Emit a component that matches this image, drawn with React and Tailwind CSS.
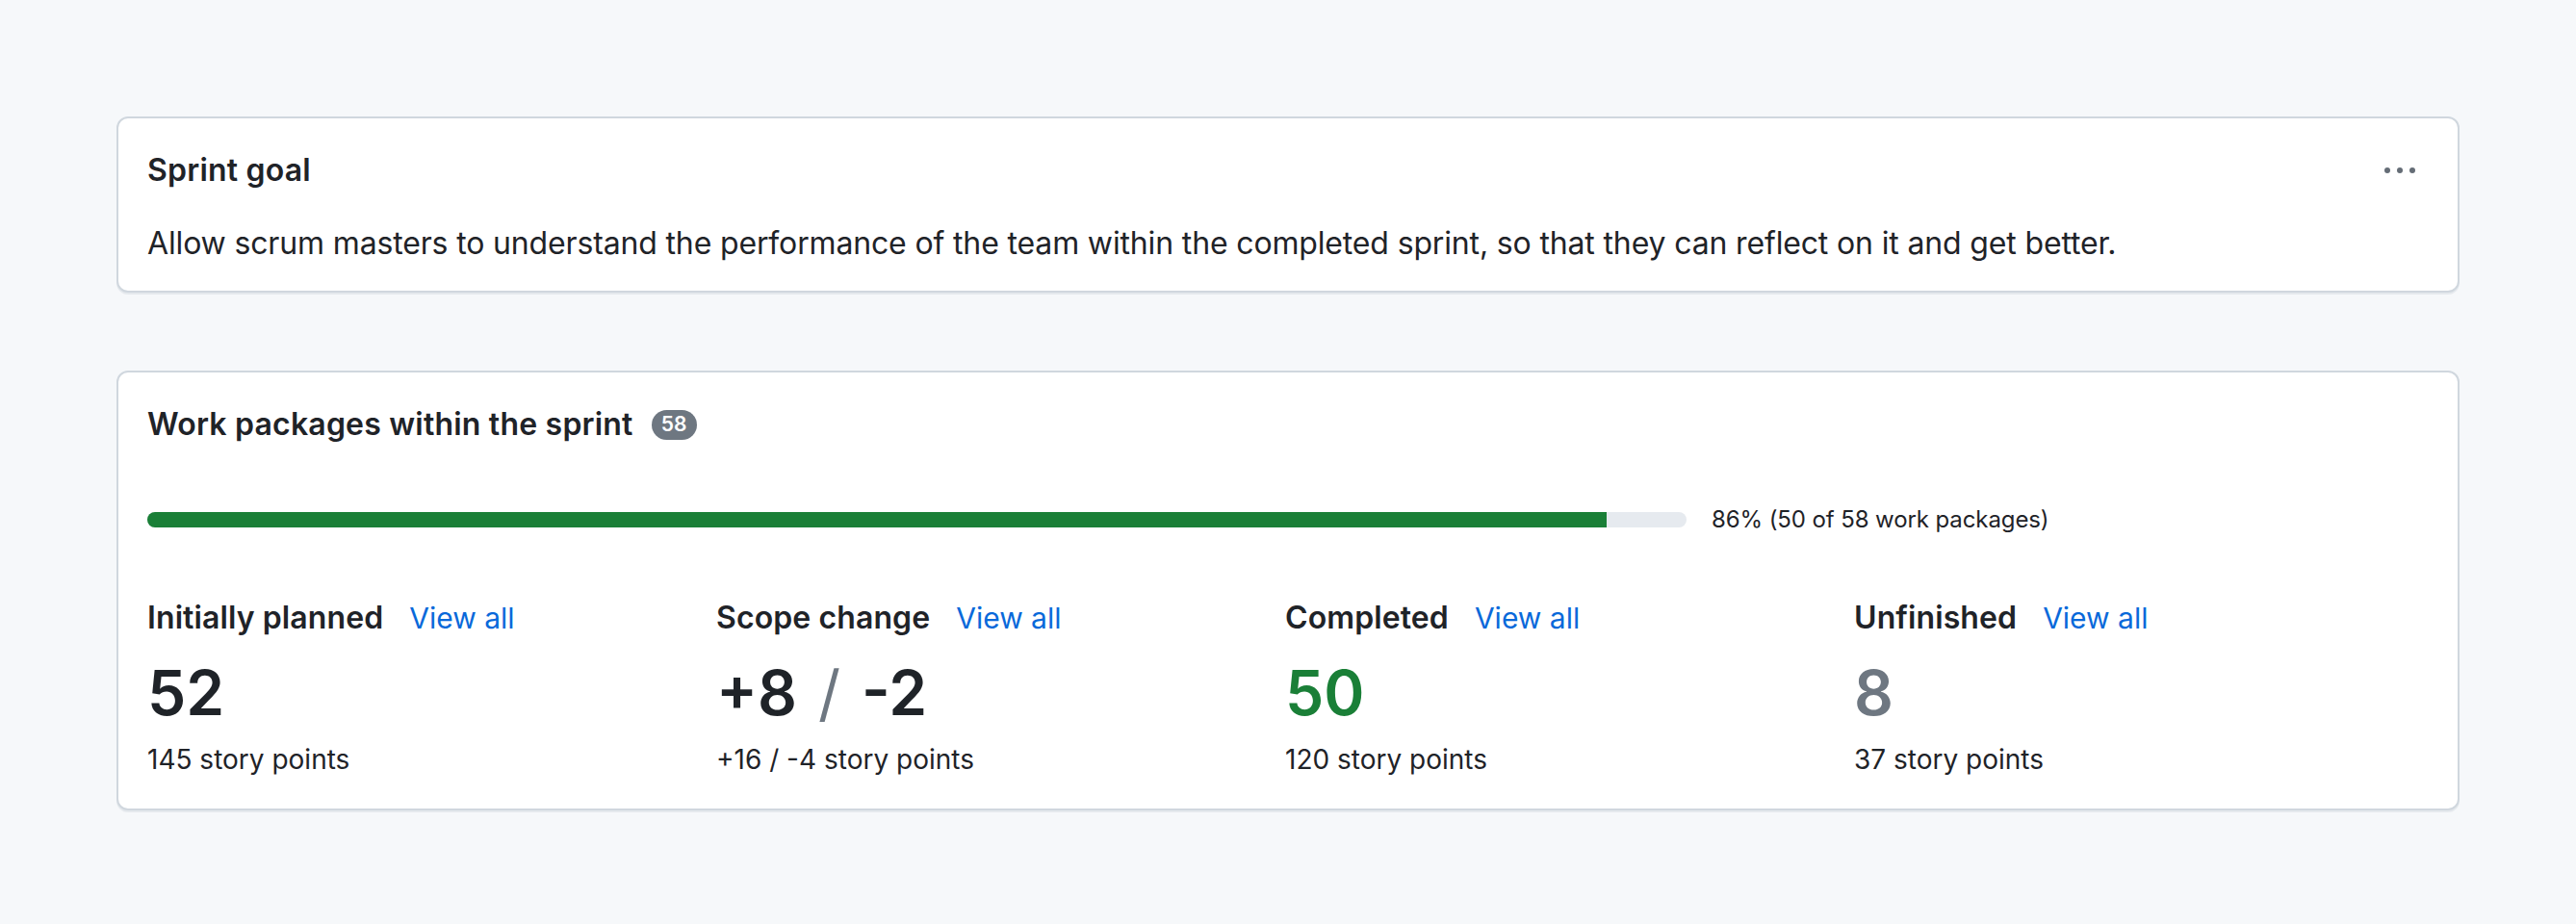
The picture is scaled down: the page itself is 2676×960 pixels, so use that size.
export default function App() {
  const stats = [
    { title: "Initially planned", value: <span>52</span>, color: "text-[#1f2328]", points: "145 story points" },
    {
      title: "Scope change",
      value: (
        <span>
          +8<span className="mx-[22px] font-normal text-[#6e7781]">/</span>-2
        </span>
      ),
      color: "text-[#1f2328]",
      points: "+16 / -4 story points",
    },
    { title: "Completed", value: <span>50</span>, color: "text-[#1a7f37]", points: "120 story points" },
    { title: "Unfinished", value: <span>8</span>, color: "text-[#6e7781]", points: "37 story points" },
  ];

  return (
    <div className="min-h-screen bg-[#f6f8fa] px-[121px] pt-[121px] pb-10 font-[Inter,sans-serif] text-[#1f2328]">
      <section className="rounded-[12px] border-2 border-[#d0d7de] bg-white px-[30px] pt-[30px] pb-[25px] shadow-[0_2px_0_rgba(208,215,222,0.45)]">
        <div className="flex items-center justify-between">
          <h2 className="text-[32px] leading-[48px] font-semibold tracking-[0.2px]">Sprint goal</h2>
          <button className="flex h-[48px] w-[60px] items-center justify-center gap-[7px]">
            <span className="h-[6px] w-[6px] rounded-full bg-[#656d76]"></span>
            <span className="h-[6px] w-[6px] rounded-full bg-[#656d76]"></span>
            <span className="h-[6px] w-[6px] rounded-full bg-[#656d76]"></span>
          </button>
        </div>
        <p className="mt-[28px] text-[32px] leading-[48px] tracking-[-0.15px]">
          Allow scrum masters to understand the performance of the team within the completed sprint, so that they can reflect on it and get better.
        </p>
      </section>

      <section className="mt-[81px] rounded-[12px] border-2 border-[#d0d7de] bg-white px-[30px] pt-[30px] pb-[30px] shadow-[0_2px_0_rgba(208,215,222,0.45)]">
        <div className="flex items-center">
          <h2 className="text-[32px] leading-[48px] font-semibold tracking-[0.2px]">Work packages within the sprint</h2>
          <span className="ml-[19px] flex h-[31px] w-[47px] items-center justify-center rounded-full bg-[#6e7781] text-[21px] font-semibold text-white">
            58
          </span>
        </div>

        <div className="mt-[57px] flex h-[36px] items-center">
          <div className="h-[16px] w-[1599px] overflow-hidden rounded-full bg-[#e6eaef]">
            <div className="h-full w-[94.8%] bg-[#1a7f37]"></div>
          </div>
          <span className="ml-[26px] text-[24px] leading-[36px] tracking-[-0.1px]">86% (50 of 58 work packages)</span>
        </div>

        <div className="mt-[60px] grid grid-cols-[repeat(4,591px)]">
          {stats.map((s) => (
            <div key={s.title} className="flex flex-col">
              <div className="flex items-center">
                <span className="text-[32px] leading-[48px] font-semibold tracking-[0.1px]">{s.title}</span>
                <a className="ml-[27px] text-[30px] leading-[48px] text-[#0969da]" href="#">
                  View all
                </a>
              </div>
              <div className={`mt-[14px] text-[64px] leading-[80px] font-semibold ${s.color}`}>{s.value}</div>
              <div className="mt-[8px] text-[28px] leading-[42px]">{s.points}</div>
            </div>
          ))}
        </div>
      </section>
    </div>
  );
}
